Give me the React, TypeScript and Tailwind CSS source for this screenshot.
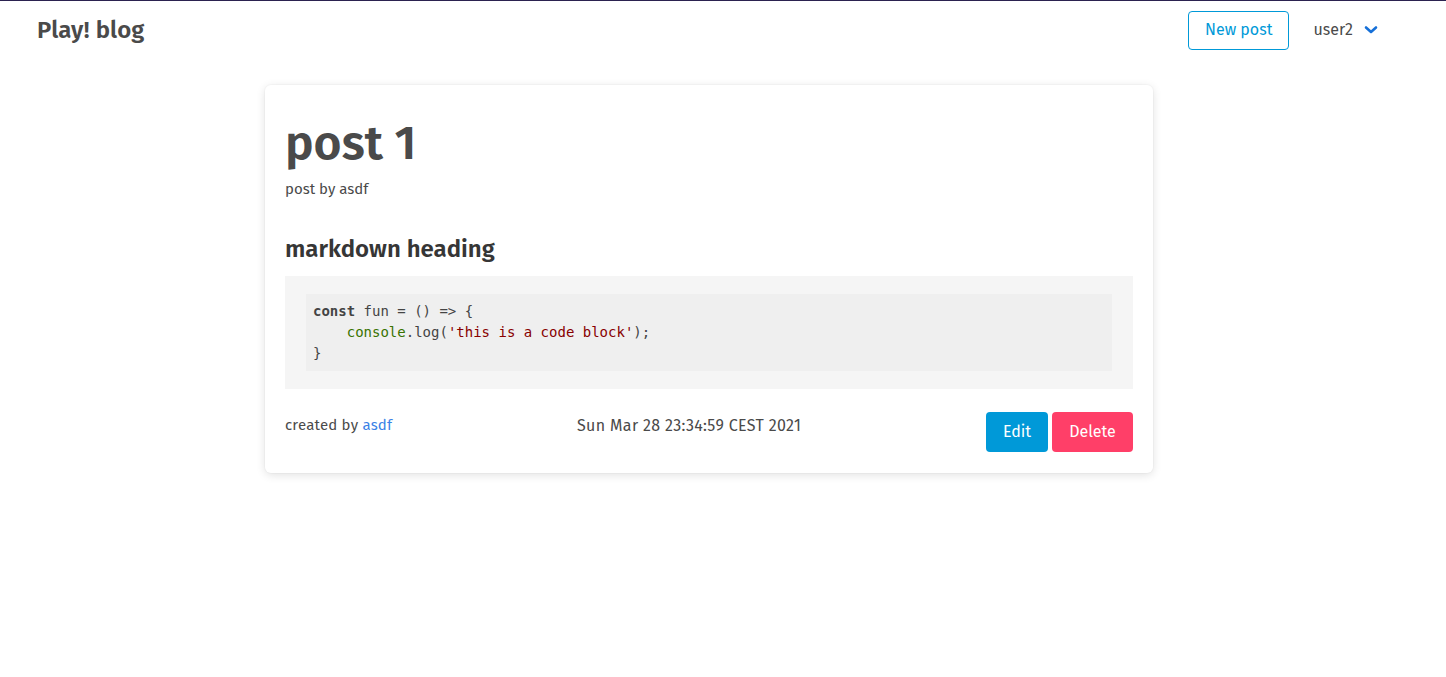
import React from "react";

export default function App() {
  const sans = { fontFamily: '"Fira Sans", "Open Sans", "Noto Sans", sans-serif' };
  return (
    <div className="min-h-[677px] bg-white text-[#4a4a4a]" style={sans}>
      <div className="h-px bg-[#2b2250]" />
      <nav className="flex h-[58px] items-center justify-between pl-[37px] pr-[68px]">
        <div className="text-[24px] font-semibold tracking-[0.1px] text-[#4a4a4a]">Play! blog</div>
        <div className="flex items-center">
          <button className="flex h-[39px] items-center rounded-[4px] border border-[#0099d8] px-[16px] text-[16px] text-[#0099d8]">
            New post
          </button>
          <div className="ml-[24px] flex items-center text-[16px] text-[#4a4a4a]">
            <span>user2</span>
            <svg className="ml-[11px]" width="14" height="10" viewBox="0 0 14 10">
              <path d="M2 2.5 L7 7 L12 2.5" fill="none" stroke="#1670d8" strokeWidth="2.6" strokeLinecap="round" strokeLinejoin="round" />
            </svg>
          </div>
        </div>
      </nav>
      <div className="ml-[265px] mt-[26px] w-[888px] rounded-[6px] bg-white px-[20px] pb-[21px] pt-[20px] shadow-[0_2px_10px_rgba(0,0,0,0.12),0_0_0_1px_rgba(0,0,0,0.02)]">
        <h1 className="mt-[12px] text-[48px] font-semibold leading-[1.1] text-[#4a4a4a]">post 1</h1>
        <p className="mt-[8px] text-[15px] text-[#4a4a4a]">post by asdf</p>
        <h2 className="mt-[31px] text-[24px] font-semibold text-[#363636]">markdown heading</h2>
        <div className="mt-[9px] bg-[#f5f5f5] px-[21px] py-[18px]">
          <pre
            className="bg-[#efefef] px-[7px] py-[7px] text-[14px] leading-[21px] text-[#444]"
            style={{ fontFamily: '"DejaVu Sans Mono", monospace' }}
          >
            <span className="font-bold">const</span> fun = () =&gt; {"{"}
            {"\n    "}
            <span className="text-[#397300]">console</span>.log(
            <span className="text-[#880000]">'this is a code block'</span>);
            {"\n}"}
          </pre>
        </div>
        <div className="mt-[23px] flex items-start justify-between">
          <div className="mt-[2px] w-[292px] text-[15px] tracking-[0.2px] text-[#4a4a4a]">
            created by <a className="text-[#3b82e6]">asdf</a>
          </div>
          <div className="mt-[2px] text-[16px] tracking-[0.35px] text-[#4a4a4a]">Sun Mar 28 23:34:59 CEST 2021</div>
          <div className="ml-auto flex gap-[4px]">
            <button className="h-[40px] w-[62px] rounded-[4px] bg-[#0099d8] text-[16px] text-white">Edit</button>
            <button className="h-[40px] w-[81px] rounded-[4px] bg-[#ff3f68] text-[16px] text-white">Delete</button>
          </div>
        </div>
      </div>
    </div>
  );
}
